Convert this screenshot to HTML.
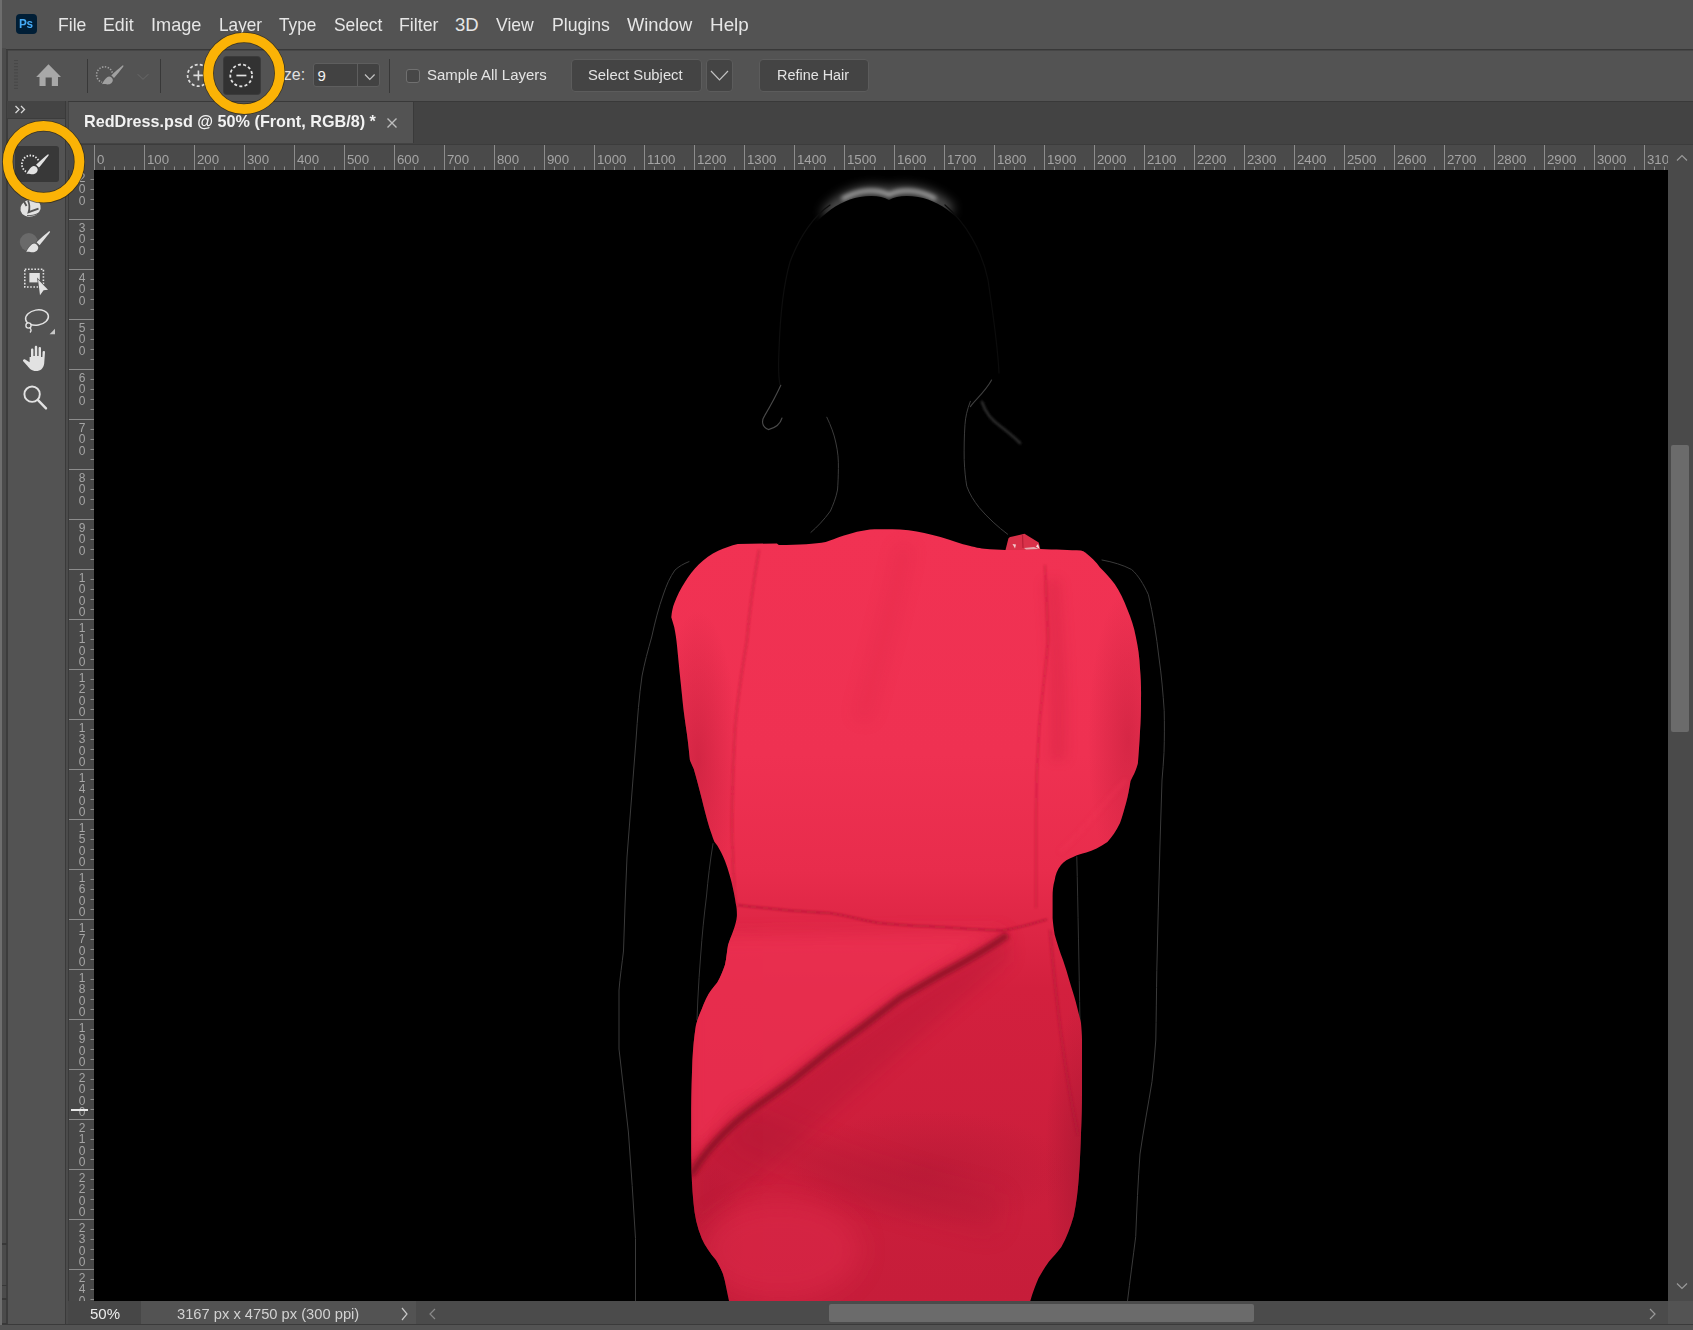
<!DOCTYPE html>
<html><head><meta charset="utf-8">
<style>
*{margin:0;padding:0;box-sizing:border-box}
html,body{width:1693px;height:1330px;overflow:hidden;background:#535353;font-family:"Liberation Sans",sans-serif}
.a{position:absolute}
.t{position:absolute;white-space:nowrap;transform-origin:0 0;line-height:1}
.menu{color:#e6e6e6;font-size:18.5px;top:16px}
.rl{position:absolute;color:#a5a5a5;font-size:13.5px;top:153px;white-space:nowrap;line-height:1;transform-origin:0 0;transform:scaleX(.98)}
.vr{position:absolute;color:#a5a5a5;font-size:12px;left:76.5px;width:11px;text-align:center;line-height:11.3px}
.btn{position:absolute;background:#434343;border:1px solid #3a3a3a;border-radius:3px;box-shadow:inset 0 0 0 1px #4a4a4a}
.ot{position:absolute;color:#e4e4e4;font-size:15.5px;white-space:nowrap;line-height:1;transform-origin:0 0}
</style></head><body>

<div class="a" style="left:0;top:0;width:2px;height:1330px;background:#6e6e6e"></div>
<div class="a" style="left:2px;top:0;width:1691px;height:48px;background:#535353"></div>
<div class="a" style="left:15.5px;top:13.5px;width:21px;height:20.5px;background:#001e36;border-radius:4px"></div>
<div class="t" style="left:18.8px;top:17px;font-size:13px;font-weight:bold;color:#45aaf5;letter-spacing:-0.2px;transform:scaleX(.9)">Ps</div>
<div class="t menu" style="left:58.05px;transform:scaleX(0.950)">File</div>
<div class="t menu" style="left:103.04px;transform:scaleX(0.960)">Edit</div>
<div class="t menu" style="left:151.02px;transform:scaleX(0.980)">Image</div>
<div class="t menu" style="left:219.07px;transform:scaleX(0.930)">Layer</div>
<div class="t menu" style="left:279.07px;transform:scaleX(0.930)">Type</div>
<div class="t menu" style="left:334.06px;transform:scaleX(0.940)">Select</div>
<div class="t menu" style="left:399.04px;transform:scaleX(0.960)">Filter</div>
<div class="t menu" style="left:455.00px;transform:scaleX(1.000)">3D</div>
<div class="t menu" style="left:496.05px;transform:scaleX(0.950)">View</div>
<div class="t menu" style="left:551.54px;transform:scaleX(0.955)">Plugins</div>
<div class="t menu" style="left:626.51px;transform:scaleX(0.990)">Window</div>
<div class="t menu" style="left:710.48px;transform:scaleX(1.020)">Help</div>
<div class="a" style="left:6px;top:49px;width:1687px;height:1px;background:#383838"></div>
<div class="a" style="left:6px;top:50px;width:1687px;height:1px;background:#464646"></div>
<div class="a" style="left:6px;top:50px;width:2px;height:51px;background:#3e3e3e"></div>
<div class="a" style="left:8px;top:51px;width:1685px;height:50px;background:#535353"></div>
<div class="a" style="left:6px;top:101px;width:1687px;height:1px;background:#393939"></div>
<svg class="a" style="left:13px;top:59px" width="6" height="32" viewBox="0 0 6 32"><path d="M1,1.5 H5 M1,4.6 H5 M1,7.7 H5 M1,10.8 H5 M1,13.9 H5 M1,17.0 H5 M1,20.1 H5 M1,23.2 H5 M1,26.3 H5 M1,29.4 H5" stroke="#474747" stroke-width="1"/></svg>
<svg class="a" style="left:34px;top:62px" width="30" height="26" viewBox="34 62 30 26"><path d="M48.5,64.2 L61,77 L58,77 L58,86 L51.8,86 L51.8,77.4 L45.6,77.4 L45.6,86 L39.5,86 L39.5,77 L36.2,77 Z" fill="#a8a8a8"/></svg>
<div class="a" style="left:86.5px;top:58.5px;width:1.6px;height:34px;background:#383838"></div>
<div class="a" style="left:159.5px;top:58.5px;width:1.6px;height:34px;background:#383838"></div>
<div class="a" style="left:388.5px;top:58.5px;width:1.6px;height:34px;background:#383838"></div>
<svg class="a" style="left:92px;top:62px" width="60" height="28" viewBox="92 62 60 28">
<circle cx="104.6" cy="74.8" r="8" fill="none" stroke="#a0a0a0" stroke-width="1.6" stroke-dasharray="1.4 1.5"/>
<path d="M0.3,-0.65 C1,-0.95 15,-2.2 17,-2.1 L17,2.1 C15,2.2 1,0.95 0.3,0.65 C-0.2,0.35 -0.2,-0.35 0.3,-0.65 Z M18.6,0.2 C18.6,-3.2 21.2,-4.3 23.4,-4 C26,-3.6 27.4,-1.8 28.5,0 C29.3,1.2 30.2,2.2 31.3,2.7 C28.2,3.9 24,4.4 21.6,4 C19.6,3.6 18.6,2 18.6,0.2 Z" fill="#a0a0a0" stroke="#535353" stroke-width="2.4" paint-order="stroke" transform="translate(123.2,65.6) rotate(133.8) scale(0.9)"/>
<path d="M137.5,74.2 L143,79.2 L148.5,74.2" fill="none" stroke="#626262" stroke-width="1.1"/>
</svg>
<svg class="a" style="left:180px;top:60px" width="30" height="30" viewBox="180 60 30 30">
<circle cx="198.4" cy="75.4" r="10.8" fill="none" stroke="#dedede" stroke-width="1.7" stroke-dasharray="3 2.2"/>
<path d="M193.4,75.4 H203.4 M198.4,70.4 V80.4" stroke="#dedede" stroke-width="1.6"/>
</svg>
<div class="a" style="left:223px;top:55.5px;width:38px;height:39px;background:#3b3b3b;border-radius:4px"></div>
<div class="a" style="left:224px;top:56.5px;width:36px;height:37px;background:#323232;border-radius:3px"></div>
<svg class="a" style="left:226px;top:60px" width="32" height="32" viewBox="226 60 32 32">
<circle cx="241.2" cy="75.4" r="10.9" fill="none" stroke="#e2e2e2" stroke-width="1.8" stroke-dasharray="3 2.3"/>
<path d="M236.4,75.5 H246.4" stroke="#e2e2e2" stroke-width="1.7"/>
</svg>
<div class="a" style="left:276px;top:60px;width:34px;height:30px;overflow:hidden"><div class="ot" style="left:-6.5px;top:7.3px;font-size:16px;color:#e0e0e0">Size:</div></div>
<div class="a" style="left:313px;top:63px;width:66.5px;height:23.5px;background:#424242;border:1px solid #5e5e5e;border-radius:3px"></div>
<div class="a" style="left:357px;top:64px;width:1px;height:21.5px;background:#5e5e5e"></div>
<div class="ot" style="left:317.5px;top:67.5px;font-size:15px;color:#f2f2f2">9</div>
<svg class="a" style="left:363px;top:72px" width="14" height="10" viewBox="0 0 14 10"><path d="M2,2.5 L6.8,7.5 L11.6,2.5" fill="none" stroke="#c4c4c4" stroke-width="1.2"/></svg>
<div class="a" style="left:406px;top:68.5px;width:14px;height:14px;border:1.3px solid #707070;border-radius:3px;background:#474747"></div>
<div class="ot" style="left:426.5px;top:67px;transform:scaleX(.965)">Sample All Layers</div>
<div class="a" style="left:570.5px;top:58.5px;width:131.5px;height:33px;background:#444444;border:1px solid #5c5c5c;border-radius:4px"></div>
<div class="ot" style="left:588.3px;top:67.3px;transform:scaleX(.955)">Select Subject</div>
<div class="a" style="left:706px;top:58.5px;width:27px;height:33px;background:#444444;border:1px solid #5c5c5c;border-radius:4px"></div>
<svg class="a" style="left:709px;top:69px" width="22" height="14" viewBox="0 0 22 14"><path d="M2,2 L10.5,11 L19,2" fill="none" stroke="#c2c2c2" stroke-width="1.2"/></svg>
<div class="a" style="left:758.5px;top:58.5px;width:110px;height:33px;background:#444444;border:1px solid #5c5c5c;border-radius:4px"></div>
<div class="ot" style="left:776.5px;top:67.3px;transform:scaleX(.93)">Refine Hair</div>
<div class="a" style="left:68px;top:102px;width:1625px;height:43px;background:#434343"></div>
<div class="a" style="left:69px;top:102px;width:344px;height:41px;background:#535353"></div>
<div class="a" style="left:413px;top:102px;width:1px;height:41px;background:#3a3a3a"></div>
<div class="t" style="left:84.2px;top:113px;font-size:17px;font-weight:bold;color:#f2f2f2;transform:scaleX(.952)">RedDress.psd @ 50% (Front, RGB/8) *</div>
<svg class="a" style="left:386px;top:117px" width="12" height="12" viewBox="0 0 12 12"><path d="M1.5,1.5 L10.5,10.5 M10.5,1.5 L1.5,10.5" stroke="#bdbdbd" stroke-width="1.4"/></svg>
<div class="a" style="left:2px;top:48px;width:4px;height:1282px;background:#4b4b4b"></div>
<div class="a" style="left:6px;top:101px;width:62px;height:1225px;background:#3c3c3c"></div>
<div class="a" style="left:7px;top:101px;width:58px;height:17px;background:#444444"></div>
<div class="a" style="left:8px;top:119px;width:57px;height:1206px;background:#535353"></div>
<div class="a" style="left:65px;top:101px;width:1px;height:1225px;background:#3a3a3a"></div>
<div class="a" style="left:66px;top:101px;width:2px;height:1229px;background:#4b4b4b"></div>
<div class="a" style="left:68px;top:145px;width:1px;height:1180px;background:#3a3a3a"></div>
<div class="a" style="left:2px;top:1243.0px;width:5px;height:1.5px;background:#383838"></div>
<div class="a" style="left:2px;top:1284.5px;width:5px;height:1.5px;background:#383838"></div>
<div class="a" style="left:2px;top:1298.0px;width:5px;height:1.5px;background:#383838"></div>
<div class="a" style="left:2px;top:1322.5px;width:5px;height:1.5px;background:#383838"></div>
<svg class="a" style="left:14px;top:104px" width="14" height="12" viewBox="0 0 14 12"><path d="M1.5,2 L5,5.5 L1.5,9 M7,2 L10.5,5.5 L7,9" fill="none" stroke="#d8d8d8" stroke-width="1.3"/></svg>
<div class="a" style="left:14.5px;top:145.5px;width:44.5px;height:36px;background:#383838;border-radius:3px"></div>
<svg class="a" style="left:8px;top:120px" width="56" height="300" viewBox="8 120 56 300">
<g fill="#e2e2e2">
<!-- quick selection tool -->
<circle cx="30.6" cy="164.2" r="8.7" fill="none" stroke="#e6e6e6" stroke-width="1.8" stroke-dasharray="1.5 1.55"/>
<path d="M0.3,-0.65 C1,-0.95 15,-2.2 17,-2.1 L17,2.1 C15,2.2 1,0.95 0.3,0.65 C-0.2,0.35 -0.2,-0.35 0.3,-0.65 Z M18.6,0.2 C18.6,-3.2 21.2,-4.3 23.4,-4 C26,-3.6 27.4,-1.8 28.5,0 C29.3,1.2 30.2,2.2 31.3,2.7 C28.2,3.9 24,4.4 21.6,4 C19.6,3.6 18.6,2 18.6,0.2 Z" stroke="#383838" stroke-width="2.4" paint-order="stroke" transform="translate(48.4,154.6) rotate(133.4) scale(0.935)"/>
<!-- refine edge brush (swirl) -->
<ellipse cx="30.5" cy="208.2" rx="10.3" ry="8.4" transform="rotate(-15 30.5 208.2)"/>
<path d="M23.5,200.5 L26.5,206 M28,200.5 C29.5,204 30,208 28.6,212.2 L38.5,208.6" fill="none" stroke="#535353" stroke-width="1.8"/>
<path d="M27,215.5 C31,216 35,215 39,213" fill="none" stroke="#535353" stroke-width="0.9"/>
<!-- brush tool -->
<circle cx="28.8" cy="242.1" r="9" fill="#6a6a6a"/>
<path d="M0.3,-0.65 C1,-0.95 15,-2.2 17,-2.1 L17,2.1 C15,2.2 1,0.95 0.3,0.65 C-0.2,0.35 -0.2,-0.35 0.3,-0.65 Z M18.6,0.2 C18.6,-3.2 21.2,-4.3 23.4,-4 C26,-3.6 27.4,-1.8 28.5,0 C29.3,1.2 30.2,2.2 31.3,2.7 C28.2,3.9 24,4.4 21.6,4 C19.6,3.6 18.6,2 18.6,0.2 Z" stroke="#535353" stroke-width="1.3" paint-order="stroke" transform="translate(49.8,231.4) rotate(133.7)"/>
<!-- object selection -->
<rect x="24.8" y="269.2" width="18.6" height="17.8" fill="none" stroke="#e2e2e2" stroke-width="1.6" stroke-dasharray="1.6 1.6"/>
<rect x="29.4" y="273" width="10.4" height="9.4"/>
<path d="M38,279.5 L48,289.8 L43.6,290.2 L40,295.2 Z" stroke="#535353" stroke-width="1.4" paint-order="stroke"/>
<!-- lasso -->
<ellipse cx="37" cy="317.6" rx="11.5" ry="7.6" transform="rotate(-10 37 317.6)" fill="none" stroke="#e2e2e2" stroke-width="1.5"/>
<circle cx="28.5" cy="325.5" r="2.6" fill="#535353" stroke="#e2e2e2" stroke-width="1.4"/>
<path d="M29.5,327.5 C31.5,329 31.5,331 30,332.5" fill="none" stroke="#e2e2e2" stroke-width="1.4"/>
<path d="M55,328.8 L55,334.2 L49.6,334.2 Z" fill="#c8c8c8"/>
<!-- hand -->
<path d="M31,357 L31,349.5 C31,348 33.4,348 33.4,349.5 L33.4,356 L34.8,356 L34.8,346.8 C34.8,345.3 37.2,345.3 37.2,346.8 L37.2,356 L38.6,356 L38.6,348.2 C38.6,346.7 41,346.7 41,348.2 L41,357 L42.4,357 L42.6,352 C42.8,350.5 45.2,350.6 45,352.2 L44.2,363.5 C43.5,368.5 40.5,371 36,371 C31.5,371 29.5,368.5 27.5,366 L23.2,361.2 C22.2,360 24,358.6 25.2,359.5 L29.6,362.2 L29.6,357 Z"/>
<!-- zoom -->
<circle cx="32.1" cy="394.2" r="7.7" fill="none" stroke="#e2e2e2" stroke-width="1.9"/>
<path d="M38,400.2 L46,408.4" stroke="#e2e2e2" stroke-width="2.4" stroke-linecap="round"/>
</g>
</svg>
<div class="a" style="left:68px;top:145px;width:1600px;height:25px;background:#4a4a4a"></div>
<div class="a" style="left:69px;top:170px;width:25px;height:1131px;background:#484848"></div>
<div class="a" style="left:68px;top:144px;width:1625px;height:1px;background:#3c3c3c"></div>
<div class="a" style="left:94px;top:170px;width:1574px;height:1131px;background:#000"></div>
<svg class="a" style="left:0;top:0" width="1693" height="1330" viewBox="0 0 1693 1330">
<defs>
<clipPath id="cv"><rect x="94" y="170" width="1574" height="1131"/></clipPath>
<clipPath id="dr"><path d="M737.8,544 L776.9,543.4 L778.8,545 C800,545 815,544 825.7,542 C832,540 836,538 839.4,537 C852,533 862,530 874.6,529.3 C884,529 892,529.2 900,529.5 C912,530 922,532.5 931.6,534.7 C944,537.5 954,541.5 963,544.2 C972,546.5 978,548 984.2,548.8 C992,549.5 999,550 1005,550 C1020,550 1030,549 1040,549 C1055,549.5 1070,550 1081,550.5 C1083,551 1084,551.5 1085.3,552.6 C1091,557 1096,562 1100,567.4 C1105,572 1110,578 1114.7,584 C1120,592 1124,600 1127.4,609.5 C1131,618 1134,627 1135.8,636.8 C1138,647 1139.5,657 1140,668.4 C1141,679 1141.2,690 1141,700 C1141,711 1140.8,721 1140,731.6 C1139.5,742 1138.8,752 1137.9,763 C1136,771 1132,778 1130.5,781 C1129,790 1128,796 1126.3,802 C1124,810 1122.5,816 1120,823 C1116,831 1112,837 1107.4,842 C1100,847 1093,850.5 1086.3,852.6 C1081,854 1077,855 1073.7,856.8 C1068,859 1064,861.5 1061,865 C1057,870 1055.5,875 1054.7,880 C1053,886 1052.6,891 1052.6,896.8 L1052.6,918 C1053,924 1053.8,929 1054.7,934.7 C1057,943 1060,952 1063,960 C1065.5,967 1067.5,974 1069.5,981 C1071.5,988 1074,995 1075.8,1002 C1077.5,1009 1079.5,1016 1081,1023 C1081.5,1029 1082,1035 1082,1040 L1082,1092 C1082,1106 1081.6,1120 1081,1133.4 C1080.5,1147 1080,1161 1079,1174.7 C1078,1189 1076.5,1203 1073.7,1216 C1070.5,1227 1066.5,1238 1061.3,1247 C1057.5,1252 1053,1257 1049,1261.5 C1045,1267 1042,1272 1038.6,1278 C1035.5,1285 1032.5,1293 1030.3,1301 L729,1301 C727,1292 725.5,1282 723,1274 C721,1269 718.5,1264 716,1260 C710,1253 705,1246 701.8,1238.6 C697,1227 694.5,1215 693.5,1203 C692,1188 691.3,1172 691.2,1155.8 L691.2,1108.4 C691.4,1092 691.8,1076 692.4,1061 C693,1048 694.2,1036 695.9,1025.5 C697.5,1019 699.5,1014 701.8,1009 C704.5,1002 707.5,995 711.3,990 C713.5,987 715.5,984.5 717.3,982.4 C720.5,977 723,971 725,964.8 C726.5,958 727,951 728,945.3 C729.5,940 731.5,936 733,931.6 C735,926 736.5,921 736.9,916 C737,911 736.6,907 735.9,904.2 C735,898 734,893 733,888.6 C731,879 728,869 725,861 C722.5,855 720,850 717.3,845.6 L714.4,841.7 C712.5,837 711,832 709.5,828 C706.5,818 704,808 701.7,798.6 C699,788 696.5,778 693.8,769 C692.5,766 691,763 689.9,760 C689,751 688,742 687,734.6 C685.5,724 684,714 683,705 C682,695 681,685 680,676 C679,666 678,656 677.1,646.6 C676.5,640 675.5,633 674.2,627 L671.3,617.3 C671.8,612 672.8,607 674.2,603.6 C677,596 680.5,589 685,582 C689,575.5 693.5,569.5 698.7,564.5 C704.5,559 711,554 718.2,550.8 C724.5,548 731,545.5 737.8,544 Z"/></clipPath>
<filter id="bl8" filterUnits="userSpaceOnUse" x="0" y="0" width="1693" height="1330"><feGaussianBlur stdDeviation="8"/></filter>
<filter id="bl6" filterUnits="userSpaceOnUse" x="0" y="0" width="1693" height="1330"><feGaussianBlur stdDeviation="6"/></filter>
<filter id="bl2" filterUnits="userSpaceOnUse" x="0" y="0" width="1693" height="1330"><feGaussianBlur stdDeviation="2"/></filter>
<filter id="bl12" filterUnits="userSpaceOnUse" x="0" y="0" width="1693" height="1330"><feGaussianBlur stdDeviation="12"/></filter>
<filter id="bl4" filterUnits="userSpaceOnUse" x="0" y="0" width="1693" height="1330"><feGaussianBlur stdDeviation="4"/></filter>
<filter id="bl1" filterUnits="userSpaceOnUse" x="0" y="0" width="1693" height="1330"><feGaussianBlur stdDeviation="0.8"/></filter>
<linearGradient id="dg" x1="0" y1="520" x2="0" y2="1301" gradientUnits="userSpaceOnUse">
<stop offset="0" stop-color="#f13253"/><stop offset="0.3" stop-color="#ef3152"/><stop offset="0.45" stop-color="#e82c4c"/><stop offset="0.6" stop-color="#d3203e"/><stop offset="1" stop-color="#c61d3a"/>
</linearGradient>
<radialGradient id="rgD"><stop offset="0" stop-color="#b81a36"/><stop offset="1" stop-color="#b81a36" stop-opacity="0"/></radialGradient>
<radialGradient id="rgD2"><stop offset="0" stop-color="#a01530"/><stop offset="1" stop-color="#a01530" stop-opacity="0"/></radialGradient>
<radialGradient id="glow"><stop offset="0" stop-color="#ffffff" stop-opacity="0.8"/><stop offset="1" stop-color="#ffffff" stop-opacity="0"/></radialGradient>
</defs>
<g clip-path="url(#cv)">

<g>
<path d="M826,216 C840,198 862,188 889,194 C916,188 938,198 950,212" fill="none" stroke="#d4d4d4" stroke-width="10" opacity="0.5" filter="url(#bl6)"/>
<path d="M842,199 C858,190 875,188 889,195 C903,188 920,190 936,199" fill="none" stroke="#ececec" stroke-width="4" opacity="0.6" filter="url(#bl2)"/>
<path d="M780,330 C780,260 815,205 860,197 C872,195 882,196 889,200 C896,196 906,195 918,197 C963,205 998,260 998,330 C998,380 990,420 889,440 C788,420 780,380 780,330 Z" fill="#000"/>
</g>
<g fill="none" stroke-linecap="round">
<path d="M830,205 C815,215 800,235 790,262 C782,290 780,320 779,350 C778,370 779,380 780,385" stroke="#0e0e0e" stroke-width="1.2"/>
<path d="M945,205 C965,222 982,250 988,280 C994,320 998,350 999,373" stroke="#0c0c0c" stroke-width="1.2"/>
<path d="M780.8,385.3 C775,398 768,410 764.8,415.4 C761,421 762,427 768.4,429.6 C775,428 780,425 782,418" stroke="#6a6a6a" stroke-width="1.1" opacity="0.7"/>
<path d="M991.6,380 C985,392 975,400 970.4,406.6" stroke="#6a6a6a" stroke-width="1.1" opacity="0.6"/>
<path d="M982,402 C986,414 992,420 1000,426 C1008,432 1014,437 1020,443" stroke="#3a3a3a" stroke-width="2.6" opacity="0.8" filter="url(#bl1)"/>
<path d="M826.8,417.2 C831,426 834,434 835.7,442 C838,452 838.6,460 838.4,468.6 C838.3,476 838,484 837.5,490 C836,498 833,505 830.4,511 C824,520 817,527 810.9,532.4" stroke="#3c3c3c" stroke-width="1"/>
<path d="M970.4,401.3 C967,410 965.5,417 965,424.3 C964.2,436 964,448 964.2,459.7 C964.6,470 965.5,479 966.8,486.3 C969.5,494 974,501 979.2,507.6 C988,518 998,527 1007.6,534.2" stroke="#3c3c3c" stroke-width="1"/>
<path d="M689,561.6 C683,564 679,566.5 675,570 C670,577 666.5,585 663.5,594 C658.5,608 655,622 651.7,637 C648,650 644.5,663 642,676 C639,697 637.5,718 636,740 C633,779 630,818 627,857 C625.5,888 624.5,920 623.5,951 C622,964 620,977 619,990 L619,1049 C622,1077 625.5,1104 628.4,1132 C631,1168 633.5,1203 635.5,1238.6 L635.5,1302" stroke="#3a3a3a" stroke-width="1"/>
<path d="M713,843.6 C710,862 708,879 706.5,896 C704,916 702,936 700.7,955 C699.5,970 698.5,985 697.8,1000 L697,1020" stroke="#333333" stroke-width="1"/>
<path d="M1102,560 C1113,562 1123,565 1131.6,569.5 C1138,575 1143.5,584 1148.4,594.7 C1153,614 1156.5,636 1159,658 C1161.5,675 1163,693 1164.2,710.5 C1164.5,724 1164.5,738 1164,752.6 C1163.5,762 1162.8,771 1162,780 C1161.3,801 1160.7,823 1160,844 C1158.8,886 1157.8,928 1156.8,970.5 C1156.5,993 1156.2,1017 1155.8,1040 C1154.8,1054 1153.5,1068 1152,1081.7 C1148,1106 1143.5,1130 1140,1154 C1138,1182 1136.8,1209 1135.7,1236.7 C1133,1258 1130,1280 1127.4,1302" stroke="#3a3a3a" stroke-width="1"/>
<path d="M1076.8,856.8 C1078,910 1079,965 1080,1023" stroke="#333333" stroke-width="1"/>
</g>

<g clip-path="url(#dr)">
<rect x="660" y="520" width="500" height="790" fill="url(#dg)"/>
<ellipse cx="698" cy="760" rx="40" ry="150" fill="url(#rgD)" opacity="0.5"/>
<ellipse cx="1128" cy="740" rx="40" ry="150" fill="url(#rgD)" opacity="0.45"/>
<ellipse cx="1085" cy="1160" rx="40" ry="160" fill="url(#rgD2)" opacity="0.6"/>
<ellipse cx="705" cy="1240" rx="40" ry="80" fill="url(#rgD)" opacity="0.5"/>
<ellipse cx="930" cy="1170" rx="140" ry="60" fill="url(#rgD2)" opacity="0.35"/>
<path d="M690,935 L1007,932 L940,972 L828,1049 L735,1120 L686,1165 L686,960 Z" fill="#ee3253" opacity="0.75" filter="url(#bl8)"/>
<path d="M1007.5,931.8 C985,948 962,960 940,972 L900.3,994.9 L864.2,1022.6 L828.1,1049 L792,1077.9 C770,1094 751,1106 735,1120 C718,1135 704,1150 691,1172 L691,1230 C760,1180 830,1110 1010,960 Z" fill="#b01834" opacity="0.35" filter="url(#bl8)"/>
<path d="M735,1125 C800,1155 880,1190 1000,1215" fill="none" stroke="#a81632" stroke-width="40" opacity="0.22" filter="url(#bl12)"/>
<ellipse cx="780" cy="1250" rx="80" ry="50" fill="#e02c4c" opacity="0.5" filter="url(#bl12)"/>
<path d="M1007.5,931.8 C985,948 962,960 940,972 L900.3,994.9 L864.2,1022.6 L828.1,1049 L792,1077.9 C770,1094 751,1106 735,1120 C718,1135 704,1150 691,1172" fill="none" stroke="#820c20" stroke-width="7" opacity="0.75" transform="translate(0,3)" filter="url(#bl2)"/>
<g fill="none" filter="url(#bl1)">
<path d="M737,905 C780,910 800,912 829,913 C850,916 865,921 878.5,923 C900,925 915,926 928,926.3 C960,928 985,930 1002.5,930.5 C1020,928 1035,923 1047,919.4" stroke="#9e1330" stroke-width="1.6" opacity="0.7"/>
<path d="M759,550 C752,590 749,615 747,640 C742,670 737,700 735,730 C733,760 732,790 732,821 C732,850 734,880 735,908" stroke="#b81a36" stroke-width="1.6" opacity="0.6"/>
<path d="M1045,565 C1046,590 1047.5,615 1048,640 C1046,670 1041,700 1039,730 C1037,760 1036,790 1036,821 C1036,850 1036,880 1036,908" stroke="#b81a36" stroke-width="1.6" opacity="0.55"/>
<path d="M1050,930 C1055,990 1062,1060 1078,1135" stroke="#a81530" stroke-width="2.5" opacity="0.45"/>
</g>
<path d="M1052,580 C1056,640 1060,690 1058,760" fill="none" stroke="#c41d3a" stroke-width="16" opacity="0.25" filter="url(#bl6)"/>
<path d="M1126,780 C1105,800 1085,830 1060,852" fill="none" stroke="#f03454" stroke-width="3" opacity="0.5" filter="url(#bl2)"/>
<path d="M905,545 C895,600 880,650 862,720" fill="none" stroke="#d42440" stroke-width="18" opacity="0.18" filter="url(#bl8)"/>
</g>
</g>
<g>
<path d="M1005.5,550 L1008.4,538.6 C1009.5,537 1011,536.8 1012.7,536.6 L1024.5,533.8 L1038.7,542.5 L1040.5,550 Z" fill="#da3149"/>
<path d="M1022.5,535 L1023,548" stroke="#a8182e" stroke-width="1.2" opacity="0.7"/>
<path d="M1012.5,544 L1015,548.5 L1016,544.5 Z" fill="#f4dada" opacity="0.9"/>
<path d="M1024,548 L1034,547 L1039,549 L1026,549.5 Z" fill="#e8c8c8" opacity="0.8"/>
<path d="M1036,546.5 L1039.5,549 L1038,544 Z" fill="#f8f0f0" opacity="0.9"/>
</g>
</g>
</svg>

<svg class="a" style="left:0;top:0" width="1693" height="1330" viewBox="0 0 1693 1330">
<path d="M94.5,145 V170 M104.5,166.5 V170 M114.5,166.5 V170 M124.5,166.5 V170 M134.5,166.5 V170 M144.5,145 V170 M154.5,166.5 V170 M164.5,166.5 V170 M174.5,166.5 V170 M184.5,166.5 V170 M194.5,145 V170 M204.5,166.5 V170 M214.5,166.5 V170 M224.5,166.5 V170 M234.5,166.5 V170 M244.5,145 V170 M254.5,166.5 V170 M264.5,166.5 V170 M274.5,166.5 V170 M284.5,166.5 V170 M294.5,145 V170 M304.5,166.5 V170 M314.5,166.5 V170 M324.5,166.5 V170 M334.5,166.5 V170 M344.5,145 V170 M354.5,166.5 V170 M364.5,166.5 V170 M374.5,166.5 V170 M384.5,166.5 V170 M394.5,145 V170 M404.5,166.5 V170 M414.5,166.5 V170 M424.5,166.5 V170 M434.5,166.5 V170 M444.5,145 V170 M454.5,166.5 V170 M464.5,166.5 V170 M474.5,166.5 V170 M484.5,166.5 V170 M494.5,145 V170 M504.5,166.5 V170 M514.5,166.5 V170 M524.5,166.5 V170 M534.5,166.5 V170 M544.5,145 V170 M554.5,166.5 V170 M564.5,166.5 V170 M574.5,166.5 V170 M584.5,166.5 V170 M594.5,145 V170 M604.5,166.5 V170 M614.5,166.5 V170 M624.5,166.5 V170 M634.5,166.5 V170 M644.5,145 V170 M654.5,166.5 V170 M664.5,166.5 V170 M674.5,166.5 V170 M684.5,166.5 V170 M694.5,145 V170 M704.5,166.5 V170 M714.5,166.5 V170 M724.5,166.5 V170 M734.5,166.5 V170 M744.5,145 V170 M754.5,166.5 V170 M764.5,166.5 V170 M774.5,166.5 V170 M784.5,166.5 V170 M794.5,145 V170 M804.5,166.5 V170 M814.5,166.5 V170 M824.5,166.5 V170 M834.5,166.5 V170 M844.5,145 V170 M854.5,166.5 V170 M864.5,166.5 V170 M874.5,166.5 V170 M884.5,166.5 V170 M894.5,145 V170 M904.5,166.5 V170 M914.5,166.5 V170 M924.5,166.5 V170 M934.5,166.5 V170 M944.5,145 V170 M954.5,166.5 V170 M964.5,166.5 V170 M974.5,166.5 V170 M984.5,166.5 V170 M994.5,145 V170 M1004.5,166.5 V170 M1014.5,166.5 V170 M1024.5,166.5 V170 M1034.5,166.5 V170 M1044.5,145 V170 M1054.5,166.5 V170 M1064.5,166.5 V170 M1074.5,166.5 V170 M1084.5,166.5 V170 M1094.5,145 V170 M1104.5,166.5 V170 M1114.5,166.5 V170 M1124.5,166.5 V170 M1134.5,166.5 V170 M1144.5,145 V170 M1154.5,166.5 V170 M1164.5,166.5 V170 M1174.5,166.5 V170 M1184.5,166.5 V170 M1194.5,145 V170 M1204.5,166.5 V170 M1214.5,166.5 V170 M1224.5,166.5 V170 M1234.5,166.5 V170 M1244.5,145 V170 M1254.5,166.5 V170 M1264.5,166.5 V170 M1274.5,166.5 V170 M1284.5,166.5 V170 M1294.5,145 V170 M1304.5,166.5 V170 M1314.5,166.5 V170 M1324.5,166.5 V170 M1334.5,166.5 V170 M1344.5,145 V170 M1354.5,166.5 V170 M1364.5,166.5 V170 M1374.5,166.5 V170 M1384.5,166.5 V170 M1394.5,145 V170 M1404.5,166.5 V170 M1414.5,166.5 V170 M1424.5,166.5 V170 M1434.5,166.5 V170 M1444.5,145 V170 M1454.5,166.5 V170 M1464.5,166.5 V170 M1474.5,166.5 V170 M1484.5,166.5 V170 M1494.5,145 V170 M1504.5,166.5 V170 M1514.5,166.5 V170 M1524.5,166.5 V170 M1534.5,166.5 V170 M1544.5,145 V170 M1554.5,166.5 V170 M1564.5,166.5 V170 M1574.5,166.5 V170 M1584.5,166.5 V170 M1594.5,145 V170 M1604.5,166.5 V170 M1614.5,166.5 V170 M1624.5,166.5 V170 M1634.5,166.5 V170 M1644.5,145 V170 M1654.5,166.5 V170 M1664.5,166.5 V170 M90.5,179.5 H94 M90.5,189.5 H94 M90.5,199.5 H94 M90.5,209.5 H94 M69,219.5 H94 M90.5,229.5 H94 M90.5,239.5 H94 M90.5,249.5 H94 M90.5,259.5 H94 M69,269.5 H94 M90.5,279.5 H94 M90.5,289.5 H94 M90.5,299.5 H94 M90.5,309.5 H94 M69,319.5 H94 M90.5,329.5 H94 M90.5,339.5 H94 M90.5,349.5 H94 M90.5,359.5 H94 M69,369.5 H94 M90.5,379.5 H94 M90.5,389.5 H94 M90.5,399.5 H94 M90.5,409.5 H94 M69,419.5 H94 M90.5,429.5 H94 M90.5,439.5 H94 M90.5,449.5 H94 M90.5,459.5 H94 M69,469.5 H94 M90.5,479.5 H94 M90.5,489.5 H94 M90.5,499.5 H94 M90.5,509.5 H94 M69,519.5 H94 M90.5,529.5 H94 M90.5,539.5 H94 M90.5,549.5 H94 M90.5,559.5 H94 M69,569.5 H94 M90.5,579.5 H94 M90.5,589.5 H94 M90.5,599.5 H94 M90.5,609.5 H94 M69,619.5 H94 M90.5,629.5 H94 M90.5,639.5 H94 M90.5,649.5 H94 M90.5,659.5 H94 M69,669.5 H94 M90.5,679.5 H94 M90.5,689.5 H94 M90.5,699.5 H94 M90.5,709.5 H94 M69,719.5 H94 M90.5,729.5 H94 M90.5,739.5 H94 M90.5,749.5 H94 M90.5,759.5 H94 M69,769.5 H94 M90.5,779.5 H94 M90.5,789.5 H94 M90.5,799.5 H94 M90.5,809.5 H94 M69,819.5 H94 M90.5,829.5 H94 M90.5,839.5 H94 M90.5,849.5 H94 M90.5,859.5 H94 M69,869.5 H94 M90.5,879.5 H94 M90.5,889.5 H94 M90.5,899.5 H94 M90.5,909.5 H94 M69,919.5 H94 M90.5,929.5 H94 M90.5,939.5 H94 M90.5,949.5 H94 M90.5,959.5 H94 M69,969.5 H94 M90.5,979.5 H94 M90.5,989.5 H94 M90.5,999.5 H94 M90.5,1009.5 H94 M69,1019.5 H94 M90.5,1029.5 H94 M90.5,1039.5 H94 M90.5,1049.5 H94 M90.5,1059.5 H94 M69,1069.5 H94 M90.5,1079.5 H94 M90.5,1089.5 H94 M90.5,1099.5 H94 M90.5,1109.5 H94 M69,1119.5 H94 M90.5,1129.5 H94 M90.5,1139.5 H94 M90.5,1149.5 H94 M90.5,1159.5 H94 M69,1169.5 H94 M90.5,1179.5 H94 M90.5,1189.5 H94 M90.5,1199.5 H94 M90.5,1209.5 H94 M69,1219.5 H94 M90.5,1229.5 H94 M90.5,1239.5 H94 M90.5,1249.5 H94 M90.5,1259.5 H94 M69,1269.5 H94 M90.5,1279.5 H94 M90.5,1289.5 H94 M90.5,1299.5 H94" stroke="#8c8c8c" stroke-width="1" fill="none"/>
</svg>
<div class="rl" style="left:96.5px">0</div>
<div class="rl" style="left:146.5px">100</div>
<div class="rl" style="left:196.5px">200</div>
<div class="rl" style="left:246.5px">300</div>
<div class="rl" style="left:296.5px">400</div>
<div class="rl" style="left:346.5px">500</div>
<div class="rl" style="left:396.5px">600</div>
<div class="rl" style="left:446.5px">700</div>
<div class="rl" style="left:496.5px">800</div>
<div class="rl" style="left:546.5px">900</div>
<div class="rl" style="left:596.5px">1000</div>
<div class="rl" style="left:646.5px">1100</div>
<div class="rl" style="left:696.5px">1200</div>
<div class="rl" style="left:746.5px">1300</div>
<div class="rl" style="left:796.5px">1400</div>
<div class="rl" style="left:846.5px">1500</div>
<div class="rl" style="left:896.5px">1600</div>
<div class="rl" style="left:946.5px">1700</div>
<div class="rl" style="left:996.5px">1800</div>
<div class="rl" style="left:1046.5px">1900</div>
<div class="rl" style="left:1096.5px">2000</div>
<div class="rl" style="left:1146.5px">2100</div>
<div class="rl" style="left:1196.5px">2200</div>
<div class="rl" style="left:1246.5px">2300</div>
<div class="rl" style="left:1296.5px">2400</div>
<div class="rl" style="left:1346.5px">2500</div>
<div class="rl" style="left:1396.5px">2600</div>
<div class="rl" style="left:1446.5px">2700</div>
<div class="rl" style="left:1496.5px">2800</div>
<div class="rl" style="left:1546.5px">2900</div>
<div class="rl" style="left:1596.5px">3000</div>
<div class="rl" style="left:1646.5px">3100</div>
<div class="a" style="left:1668px;top:145px;width:25px;height:25px;background:#4a4a4a"></div>
<div class="vr" style="top:173.0px">2<br>0<br>0</div>
<div class="vr" style="top:223.0px">3<br>0<br>0</div>
<div class="vr" style="top:273.0px">4<br>0<br>0</div>
<div class="vr" style="top:323.0px">5<br>0<br>0</div>
<div class="vr" style="top:373.0px">6<br>0<br>0</div>
<div class="vr" style="top:423.0px">7<br>0<br>0</div>
<div class="vr" style="top:473.0px">8<br>0<br>0</div>
<div class="vr" style="top:523.0px">9<br>0<br>0</div>
<div class="vr" style="top:573.0px">1<br>0<br>0<br>0</div>
<div class="vr" style="top:623.0px">1<br>1<br>0<br>0</div>
<div class="vr" style="top:673.0px">1<br>2<br>0<br>0</div>
<div class="vr" style="top:723.0px">1<br>3<br>0<br>0</div>
<div class="vr" style="top:773.0px">1<br>4<br>0<br>0</div>
<div class="vr" style="top:823.0px">1<br>5<br>0<br>0</div>
<div class="vr" style="top:873.0px">1<br>6<br>0<br>0</div>
<div class="vr" style="top:923.0px">1<br>7<br>0<br>0</div>
<div class="vr" style="top:973.0px">1<br>8<br>0<br>0</div>
<div class="vr" style="top:1023.0px">1<br>9<br>0<br>0</div>
<div class="vr" style="top:1073.0px">2<br>0<br>0<br>0</div>
<div class="vr" style="top:1123.0px">2<br>1<br>0<br>0</div>
<div class="vr" style="top:1173.0px">2<br>2<br>0<br>0</div>
<div class="vr" style="top:1223.0px">2<br>3<br>0<br>0</div>
<div class="vr" style="top:1273.0px">2<br>4<br>0<br>0</div>
<div class="a" style="left:68px;top:1301px;width:26px;height:24px;background:#474747"></div>
<div class="a" style="left:68px;top:145px;width:26px;height:25px;background:#4a4a4a"></div>
<div class="a" style="left:71px;top:1109px;width:17px;height:2px;background:#e8e8e8"></div>
<div class="a" style="left:1668px;top:145px;width:25px;height:1156px;background:#4a4a4a"></div>
<div class="a" style="left:1671px;top:445px;width:18px;height:287px;background:#6b6b6b;border-radius:2px"></div>
<svg class="a" style="left:1676px;top:154px" width="12" height="8" viewBox="0 0 12 8"><path d="M1,6.5 L6,1.5 L11,6.5" stroke="#9a9a9a" stroke-width="1.2" fill="none"/></svg>
<svg class="a" style="left:1676px;top:1282px" width="12" height="8" viewBox="0 0 12 8"><path d="M1,1.5 L6,6.5 L11,1.5" stroke="#9a9a9a" stroke-width="1.2" fill="none"/></svg>
<div class="a" style="left:68px;top:1301px;width:1625px;height:24px;background:#4b4b4b"></div>
<div class="a" style="left:68px;top:1301px;width:73px;height:24px;background:#474747"></div>
<div class="a" style="left:141px;top:1301px;width:275px;height:24px;background:#535353"></div>
<div class="a" style="left:829px;top:1304px;width:425px;height:18px;background:#6b6b6b;border-radius:2px"></div>
<div class="a" style="left:1668px;top:1301px;width:25px;height:24px;background:#535353"></div>
<div class="a" style="left:0;top:1325px;width:1693px;height:5px;background:#535353"></div>
<div class="a" style="left:2px;top:1324px;width:1691px;height:1px;background:#3a3a3a"></div>
<div class="t" style="left:90px;top:1306px;font-size:15px;color:#ececec">50%</div>
<div class="t" style="left:177px;top:1306px;font-size:15px;color:#d2d2d2;transform:scaleX(.98)">3167 px x 4750 px (300 ppi)</div>
<svg class="a" style="left:400px;top:1307px" width="10" height="14" viewBox="0 0 10 14"><path d="M2,1 L7,7 L2,13" stroke="#c8c8c8" stroke-width="1.2" fill="none"/></svg>
<svg class="a" style="left:427px;top:1308px" width="10" height="12" viewBox="0 0 10 12"><path d="M8,1 L3,6 L8,11" stroke="#8a8a8a" stroke-width="1.2" fill="none"/></svg>
<svg class="a" style="left:1648px;top:1308px" width="10" height="12" viewBox="0 0 10 12"><path d="M2,1 L7,6 L2,11" stroke="#9a9a9a" stroke-width="1.2" fill="none"/></svg>
<svg class="a" style="left:0;top:0" width="300" height="220" viewBox="0 0 300 220">
<circle cx="43.6" cy="161.8" r="35.9" fill="none" stroke="#2a1e00" stroke-width="11.2" opacity="0.6"/>
<circle cx="43.6" cy="161.8" r="35.9" fill="none" stroke="#fbb306" stroke-width="9.7"/>
<circle cx="244" cy="73.3" r="35.8" fill="none" stroke="#2a1e00" stroke-width="11.2" opacity="0.6"/>
<circle cx="244" cy="73.3" r="35.8" fill="none" stroke="#fbb306" stroke-width="9.7"/>
</svg>
</body></html>
